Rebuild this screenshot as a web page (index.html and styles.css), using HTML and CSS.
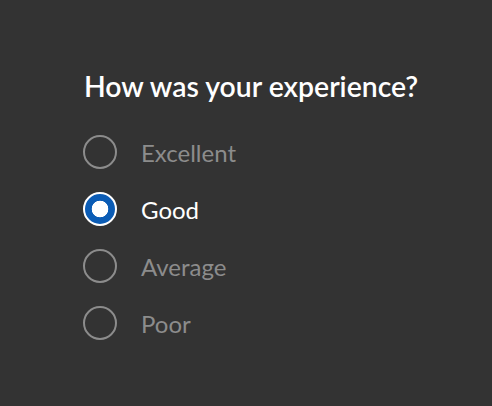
FILE: index.html
```html
<!DOCTYPE html>
<html>
<head>
<meta charset="utf-8">
<link rel="stylesheet" href="styles.css">
</head>
<body>
<div class="card">
  <h1 class="title">How was your experience?</h1>
  <div class="options">
    <label class="option"><span class="radio"></span><span class="label">Excellent</span></label>
    <label class="option selected"><span class="radio"></span><span class="label">Good</span></label>
    <label class="option"><span class="radio"></span><span class="label">Average</span></label>
    <label class="option"><span class="radio"></span><span class="label">Poor</span></label>
  </div>
</div>
</body>
</html>
```
FILE: styles.css
```css
html, body {
  margin: 0;
  padding: 0;
  background: #333333;
  height: 100%;
}
body {
  font-family: Lato, "Noto Sans", sans-serif;
}
.card {
  padding: 68px 0 0 84px;
}
.title {
  margin: 0;
  font-size: 28.4px;
  font-weight: 600;
  color: #ffffff;
  line-height: 36px;
}
.options {
  display: flex;
  flex-direction: column;
  gap: 23px;
  margin-top: 31px;
  margin-left: -1px;
}
.option {
  display: flex;
  align-items: center;
  gap: 24px;
  height: 34px;
}
.radio {
  width: 34px;
  height: 34px;
  box-sizing: border-box;
  border-radius: 50%;
  border: 2px solid #8c8c8c;
  flex: none;
}
.label {
  font-size: 24px;
  color: #8c8c8c;
}
.selected .radio {
  border: 2px solid #ffffff;
  background: radial-gradient(circle, #ffffff 0 8px, #0b5cb5 8.6px);
}
.selected .label {
  color: #ffffff;
}
```
